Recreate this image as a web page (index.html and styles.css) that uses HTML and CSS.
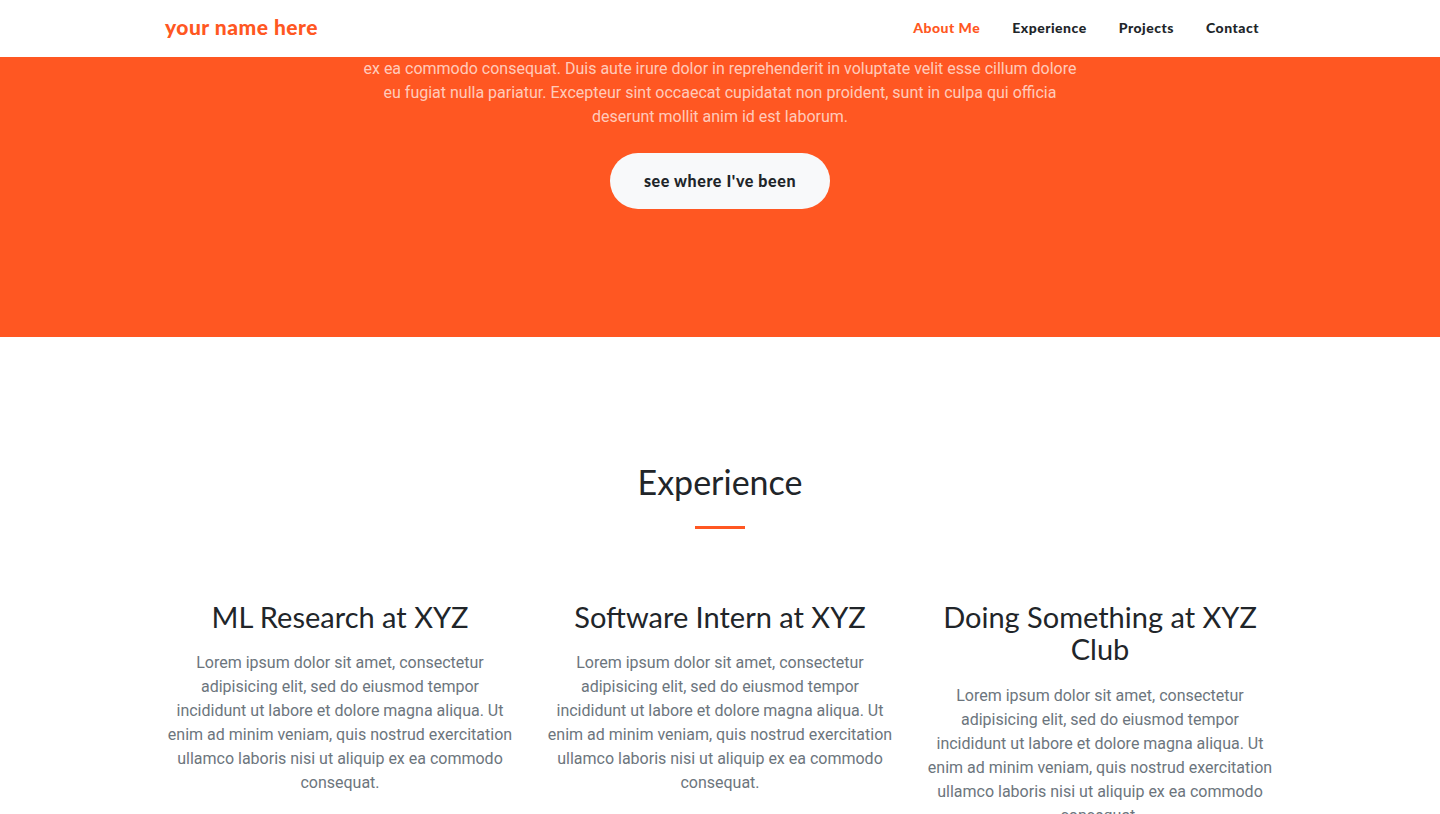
FILE: index.html
```html
<!DOCTYPE html>
<html lang="en">
<head>
<meta charset="utf-8">
<title>your name here</title>
<link rel="stylesheet" href="styles.css">
</head>
<body>
<nav class="navbar">
  <div class="container nav-inner">
    <a class="brand" href="#">your name here</a>
    <ul class="nav-links">
      <li><a class="active" href="#">About Me</a></li>
      <li><a href="#">Experience</a></li>
      <li><a href="#">Projects</a></li>
      <li><a href="#">Contact</a></li>
    </ul>
  </div>
</nav>
<header class="hero">
  <p class="hero-text">ex ea commodo consequat. Duis aute irure dolor in reprehenderit in voluptate velit esse cillum dolore<br>eu fugiat nulla pariatur. Excepteur sint occaecat cupidatat non proident, sunt in culpa qui officia<br>deserunt mollit anim id est laborum.</p>
  <a class="btn-pill" href="#">see where I've been</a>
</header>
<section class="experience">
  <h2 class="section-title">Experience</h2>
  <div class="divider"></div>
  <div class="container cols">
    <div class="col">
      <h3>ML Research at XYZ</h3>
      <p>Lorem ipsum dolor sit amet, consectetur adipisicing elit, sed do eiusmod tempor incididunt ut labore et dolore magna aliqua. Ut enim ad minim veniam, quis nostrud exercitation ullamco laboris nisi ut aliquip ex ea commodo consequat.</p>
    </div>
    <div class="col">
      <h3>Software Intern at XYZ</h3>
      <p>Lorem ipsum dolor sit amet, consectetur adipisicing elit, sed do eiusmod tempor incididunt ut labore et dolore magna aliqua. Ut enim ad minim veniam, quis nostrud exercitation ullamco laboris nisi ut aliquip ex ea commodo consequat.</p>
    </div>
    <div class="col">
      <h3>Doing Something at XYZ Club</h3>
      <p>Lorem ipsum dolor sit amet, consectetur adipisicing elit, sed do eiusmod tempor incididunt ut labore et dolore magna aliqua. Ut enim ad minim veniam, quis nostrud exercitation ullamco laboris nisi ut aliquip ex ea commodo consequat.</p>
    </div>
  </div>
</section>
</body>
</html>
```
FILE: styles.css
```css
* { box-sizing: border-box; }
html, body { margin: 0; padding: 0; }
body {
  font-family: Roboto, "Liberation Sans", sans-serif;
  font-size: 16px;
  line-height: 24px;
  color: #212529;
  background: #fff;
  overflow: hidden;
}
a { text-decoration: none; }

.container {
  width: 1140px;
  margin: 0 auto;
  padding: 0 15px;
}

.navbar {
  height: 57px;
  background: #fff;
}
.nav-inner {
  height: 100%;
  padding-bottom: 2px;
  display: flex;
  align-items: center;
  justify-content: space-between;
}
.brand {
  font-family: Lato, "Open Sans", sans-serif;
  font-weight: 900;
  font-size: 21px;
  color: #ff5722;
  letter-spacing: 0.5px;
  margin-top: -2px;
}
.nav-links {
  list-style: none;
  margin: 0;
  padding: 0;
  display: flex;
}
.nav-links a {
  display: block;
  padding: 8px 16px;
  font-family: Lato, "Open Sans", sans-serif;
  font-weight: 900;
  font-size: 14px;
  color: #212529;
  letter-spacing: 0.5px;
}
.nav-links a.active { color: #ff5722; }

.hero {
  background: #ff5722;
  height: 280px;
  display: flex;
  flex-direction: column;
  align-items: center;
}
.hero-text {
  margin: 0;
  width: 740px;
  text-align: center;
  color: rgba(255, 255, 255, 0.7);
  font-size: 16px;
  line-height: 24px;
}
.btn-pill {
  margin-top: 24px;
  width: 220px;
  height: 56px;
  border-radius: 28px;
  background: #f8f9fa;
  color: #212529;
  display: flex;
  align-items: center;
  justify-content: center;
  font-family: Lato, "Open Sans", sans-serif;
  font-weight: 900;
  font-size: 16px;
  letter-spacing: 0.6px;
}

.experience {
  padding-top: 125px;
}
.section-title {
  margin: 0;
  text-align: center;
  font-family: Lato, "Open Sans", sans-serif;
  font-weight: 400;
  font-size: 34px;
  line-height: 40.8px;
  color: #212529;
}
.divider {
  width: 50px;
  height: 3px;
  background: #ff5722;
  margin: 23px auto 0;
}
.cols {
  margin-top: 72px;
  display: grid;
  grid-template-columns: repeat(3, 1fr);
  column-gap: 30px;
}
.col {
  text-align: center;
}
.col h3 {
  margin: 0 0 18px;
  font-family: Lato, "Open Sans", sans-serif;
  font-weight: 400;
  font-size: 29px;
  line-height: 32.5px;
  color: #212529;
}
.col p {
  margin: 0;
  color: #6c757d;
  font-size: 16px;
  line-height: 24px;
}
```
